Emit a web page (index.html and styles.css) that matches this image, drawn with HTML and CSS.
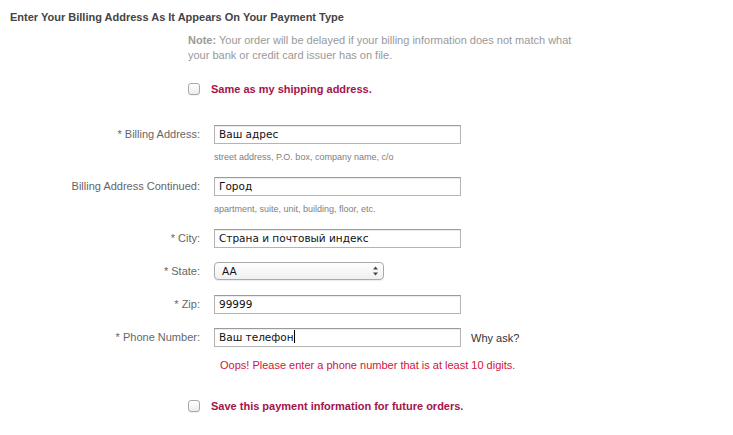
FILE: index.html
```html
<!DOCTYPE html>
<html lang="en">
<head>
<meta charset="utf-8">
<title>Billing Address</title>
<link rel="stylesheet" href="styles.css">
</head>
<body>
<div class="page">
  <h1 class="title">Enter Your Billing Address As It Appears On Your Payment Type</h1>
  <p class="note"><b>Note:</b> Your order will be delayed if your billing information does not match what your bank or credit card issuer has on file.</p>
  <label class="check-row first">
    <span class="box"></span>
    <span class="check-text">Same as my shipping address.</span>
  </label>

  <div class="form">
    <div class="row hinted">
      <div class="label">* Billing Address:</div>
      <div class="field">
        <div class="input">Ваш адрес</div>
        <div class="hint">street address, P.O. box, company name, c/o</div>
      </div>
    </div>
    <div class="row hinted">
      <div class="label">Billing Address Continued:</div>
      <div class="field">
        <div class="input">Город</div>
        <div class="hint">apartment, suite, unit, building, floor, etc.</div>
      </div>
    </div>
    <div class="row">
      <div class="label">* City:</div>
      <div class="field">
        <div class="input">Страна и почтовый индекс</div>
      </div>
    </div>
    <div class="row">
      <div class="label">* State:</div>
      <div class="field">
        <div class="select"><span>AA</span>
          <svg class="arrows" width="7" height="10" viewBox="0 0 7 10"><path d="M3.5 0.5 L6 3.5 H1 Z" fill="#444"/><path d="M3.5 9.5 L6 6.5 H1 Z" fill="#444"/></svg>
        </div>
      </div>
    </div>
    <div class="row">
      <div class="label">* Zip:</div>
      <div class="field">
        <div class="input">99999</div>
      </div>
    </div>
    <div class="row phone">
      <div class="label">* Phone Number:</div>
      <div class="field">
        <div class="inline">
          <div class="input">Ваш телефон<span class="caret"></span></div>
          <span class="why">Why ask?</span>
        </div>
        <div class="error">Oops! Please enter a phone number that is at least 10 digits.</div>
      </div>
    </div>
  </div>

  <label class="check-row save">
    <span class="box"></span>
    <span class="check-text">Save this payment information for future orders.</span>
  </label>
</div>
</body>
</html>
```
FILE: styles.css
```css
html, body {
  margin: 0;
  padding: 0;
  background: #ffffff;
}
.page {
  font-family: "Liberation Sans", Arial, Helvetica, sans-serif;
  font-size: 11px;
  color: #666;
  padding-top: 10px;
}
.title {
  margin: 0 0 0 10px;
  font-size: 11px;
  line-height: 14px;
  font-weight: bold;
  color: #444;
}
.note {
  margin: 9px 0 0 188px;
  width: 400px;
  line-height: 15px;
  color: #999;
}
.note b {
  color: #9a9a9a;
}
.check-row {
  display: flex;
  align-items: center;
  margin-left: 188px;
  height: 14px;
}
.check-row.first {
  margin-top: 19px;
}
.box {
  width: 10px;
  height: 10px;
  border: 1px solid #a8a8a8;
  border-radius: 3px;
  background: linear-gradient(#ffffff, #ececec);
  box-shadow: 0 1px 0 rgba(0,0,0,0.05);
}
.check-text {
  margin-left: 11px;
  font-weight: bold;
  color: #a3134b;
}
.form {
  margin-top: 29px;
}
.row {
  display: flex;
  gap: 14px;
  margin-bottom: 14px;
}
.row.phone {
  margin-bottom: 0;
}
.label {
  width: 200px;
  text-align: right;
  line-height: 19px;
  flex: none;
}
.field {
  display: flex;
  flex-direction: column;
}
.input {
  box-sizing: border-box;
  width: 247px;
  height: 19px;
  border: 1px solid #b4b4b4;
  border-top-color: #9a9a9a;
  box-shadow: inset 0 1px 1px rgba(0,0,0,0.08);
  padding-left: 4px;
  font-family: "DejaVu Sans", "Lucida Grande", sans-serif;
  font-size: 10.5px;
  line-height: 17px;
  color: #111;
  background: #fff;
}
.caret {
  display: inline-block;
  width: 1px;
  height: 13px;
  background: #000;
  vertical-align: -2px;
}
.hint {
  margin-top: 7px;
  font-size: 9px;
  line-height: 12px;
  color: #808080;
}
.select {
  box-sizing: border-box;
  width: 170px;
  height: 18px;
  border: 1px solid #aaa;
  border-radius: 4px;
  background: linear-gradient(#ffffff, #f0f0f0);
  box-shadow: 0 1px 1px rgba(0,0,0,0.08);
  display: flex;
  align-items: center;
  justify-content: space-between;
  padding: 0 4px 0 7px;
  font-family: "DejaVu Sans", "Lucida Grande", sans-serif;
  font-size: 10.5px;
  color: #111;
}
.arrows {
  display: block;
}
.inline {
  display: flex;
  align-items: center;
  gap: 10px;
}
.why {
  color: #333;
  white-space: nowrap;
}
.error {
  margin-top: 11px;
  margin-left: 6px;
  line-height: 14px;
  color: #d0143c;
}
.check-row.save {
  margin-top: 27px;
}
```
